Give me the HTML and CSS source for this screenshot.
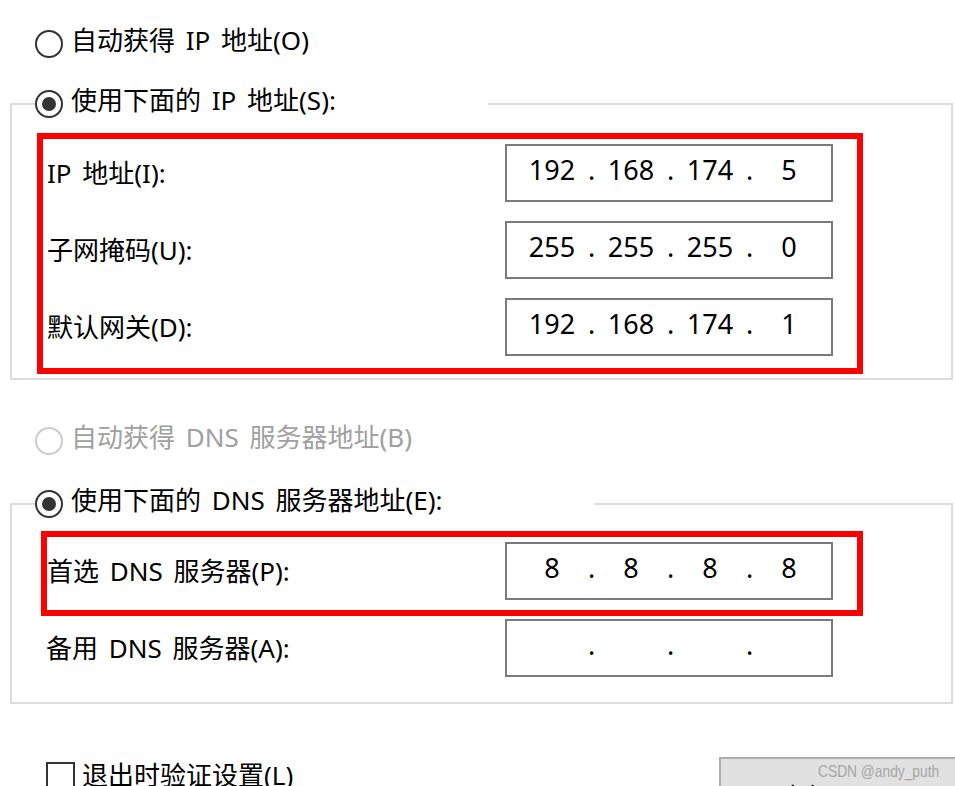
FILE: index.html
```html
<!DOCTYPE html>
<html lang="zh-CN">
<head>
<meta charset="utf-8">
<title>Internet 协议版本 4 (TCP/IPv4) 属性</title>
<link rel="stylesheet" href="styles.css">
</head>
<body>
<div class="dialog">
  <div class="opt"><span class="radio"></span><span class="txt">自动获得 IP 地址(O)</span></div>

  <fieldset class="group g1">
    <legend><div class="opt in-leg"><span class="radio on"></span><span class="txt">使用下面的 IP 地址(S):</span></div></legend>
    <div class="mark m1">
      <div class="row"><span class="lab">IP 地址(I):</span>
        <div class="ip"><span class="seg">192</span><span class="dot">.</span><span class="seg">168</span><span class="dot">.</span><span class="seg">174</span><span class="dot">.</span><span class="seg">5</span></div>
      </div>
      <div class="row"><span class="lab">子网掩码(U):</span>
        <div class="ip"><span class="seg">255</span><span class="dot">.</span><span class="seg">255</span><span class="dot">.</span><span class="seg">255</span><span class="dot">.</span><span class="seg">0</span></div>
      </div>
      <div class="row"><span class="lab">默认网关(D):</span>
        <div class="ip"><span class="seg">192</span><span class="dot">.</span><span class="seg">168</span><span class="dot">.</span><span class="seg">174</span><span class="dot">.</span><span class="seg">1</span></div>
      </div>
    </div>
  </fieldset>

  <div class="opt disabled"><span class="radio"></span><span class="txt">自动获得 DNS 服务器地址(B)</span></div>

  <fieldset class="group g2">
    <legend><div class="opt in-leg"><span class="radio on"></span><span class="txt">使用下面的 DNS 服务器地址(E):</span></div></legend>
    <div class="mark m2">
      <div class="row"><span class="lab">首选 DNS 服务器(P):</span>
        <div class="ip"><span class="seg">8</span><span class="dot">.</span><span class="seg">8</span><span class="dot">.</span><span class="seg">8</span><span class="dot">.</span><span class="seg">8</span></div>
      </div>
    </div>
    <div class="row r5"><span class="lab">备用 DNS 服务器(A):</span>
      <div class="ip"><span class="seg"></span><span class="dot">.</span><span class="seg"></span><span class="dot">.</span><span class="seg"></span><span class="dot">.</span><span class="seg"></span></div>
    </div>
  </fieldset>

  <div class="footer">
    <div class="check"><span class="box"></span><span class="txt">退出时验证设置(L)</span></div>
    <div class="btn">高级(V)...<span class="wm">CSDN @andy_puth</span></div>
  </div>
</div>
</body>
</html>
```
FILE: styles.css
```css
html, body {
  margin: 0;
  overflow: hidden;
}
body {
  width: 955px;
  height: 786px;
  background: #fff;
  color: #000;
  font-family: "Noto Sans", "Noto Sans CJK SC", sans-serif;
  font-size: 26px;
}
.dialog {
  padding-top: 24px;
}
.opt {
  display: flex;
  align-items: center;
  height: 32px;
  padding-bottom: 8px;
  margin-left: 35px;
  gap: 8px;
  line-height: 32px;
  white-space: nowrap;
  word-spacing: 4px;
}
.opt.in-leg {
  margin-left: 0;
}
.radio {
  width: 28px;
  height: 28px;
  box-sizing: border-box;
  border: 2px solid #333;
  border-radius: 50%;
  margin-top: 8px;
  display: flex;
  align-items: center;
  justify-content: center;
  flex-shrink: 0;
  background: #fff;
}
.radio.on::after {
  content: "";
  width: 14px;
  height: 14px;
  border-radius: 50%;
  background: #333;
}
.opt.disabled {
  margin-top: 41px;
  color: #a0a0a0;
}
.opt.disabled .radio {
  border-color: #cccccc;
}
.group {
  margin: 20px 0 0 10px;
  width: 943px;
  min-width: 0;
  box-sizing: border-box;
  border: 2px solid #dcdcdc;
  padding: 0 0 4px 0;
}
.group legend {
  padding: 0;
  margin-left: 23px;
}
.g1 legend {
  width: 453px;
}
.g2 {
  margin-top: 23px;
  padding-bottom: 25px;
}
.g2 legend {
  width: 559px;
}
.mark {
  border: 6px solid #ff0000;
  box-sizing: border-box;
  display: flex;
  flex-direction: column;
  gap: 19px;
}
.m1 {
  margin: 9px 0 0 25px;
  width: 826px;
  padding: 5px 24px 12px 4px;
}
.m2 {
  margin: 7px 0 0 29px;
  width: 822px;
  padding: 5px 24px 10px 0;
}
.row {
  display: flex;
  align-items: center;
  height: 58px;
}
.lab {
  flex: 1;
  white-space: nowrap;
  line-height: 32px;
  word-spacing: 4px;
}
.ip {
  width: 328px;
  height: 58px;
  box-sizing: border-box;
  border: 2px solid #7a7a7a;
  display: flex;
  align-items: center;
  padding: 0 0 6px 14px;
  font-family: "Noto Sans", sans-serif;
  font-size: 27px;
  line-height: 36px;
}
.seg {
  width: 62px;
  text-align: center;
}
.dot {
  width: 17px;
  text-align: center;
}
.r5 {
  margin: 3px 0 0 34px;
  width: 787px;
}
.footer {
  display: grid;
  grid-template-columns: 673px 260px;
  padding-left: 46px;
  margin-top: 53px;
}
.check {
  display: flex;
  align-items: flex-start;
  gap: 7px;
}
.box {
  width: 29px;
  height: 29px;
  box-sizing: border-box;
  border: 2px solid #333;
  margin-top: 5px;
  flex-shrink: 0;
}
.check .txt {
  line-height: 32px;
  margin-top: 2px;
  white-space: nowrap;
}
.btn {
  position: relative;
  height: 60px;
  box-sizing: border-box;
  border: 2px solid #adadad;
  background: #e1e1e1;
  padding: 22px 0 0 59px;
  line-height: 32px;
  white-space: nowrap;
}
.wm {
  position: absolute;
  left: 97px;
  top: 3px;
  font-family: "Liberation Sans", sans-serif;
  font-size: 17px;
  line-height: 20px;
  color: #a6a6a6;
  transform: scaleX(0.81);
  transform-origin: left top;
}
```
